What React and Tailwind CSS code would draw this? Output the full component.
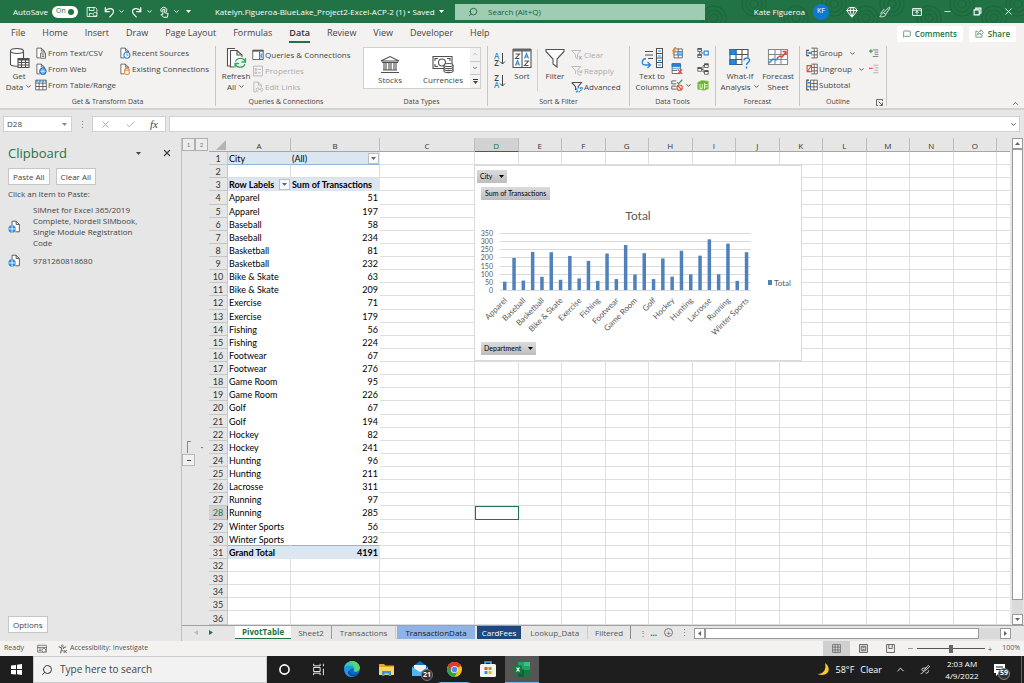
import { ChevronDown, ChevronUp, Circle, Gem, Minus, Search, X, Check, MessageSquare } from 'lucide-react'
import clsx from 'clsx'

const MENU = ['File', 'Home', 'Insert', 'Draw', 'Page Layout', 'Formulas', 'Data', 'Review', 'View', 'Developer', 'Help']

const SALES = [
  ['Apparel', 51],
  ['Apparel', 197],
  ['Baseball', 58],
  ['Baseball', 234],
  ['Basketball', 81],
  ['Basketball', 232],
  ['Bike & Skate', 63],
  ['Bike & Skate', 209],
  ['Exercise', 71],
  ['Exercise', 179],
  ['Fishing', 56],
  ['Fishing', 224],
  ['Footwear', 67],
  ['Footwear', 276],
  ['Game Room', 95],
  ['Game Room', 226],
  ['Golf', 67],
  ['Golf', 194],
  ['Hockey', 82],
  ['Hockey', 241],
  ['Hunting', 96],
  ['Hunting', 211],
  ['Lacrosse', 311],
  ['Running', 97],
  ['Running', 285],
  ['Winter Sports', 56],
  ['Winter Sports', 232],
]

const COLUMNS = ['A', 'B', 'C', 'D', 'E', 'F', 'G', 'H', 'I', 'J', 'K', 'L', 'M', 'N', 'O']
const ROWS = Array.from({ length: 36 }, (_, i) => i + 1)

/* ---------- icons ---------- */

function Icon({ size = 12, box = 16, className, children }) {
  return (
    <svg
      width={size}
      height={size}
      viewBox={`0 0 ${box} ${box}`}
      fill="none"
      stroke="#505050"
      strokeWidth="1.1"
      className={clsx('shrink-0', className)}
      aria-hidden="true"
    >
      {children}
    </svg>
  )
}

function Chevron() {
  return <ChevronDown size={7} strokeWidth={3} className="shrink-0" aria-hidden="true" />
}

function Caret({ className }) {
  return (
    <svg width="5" height="3" viewBox="0 0 5 3" className={clsx('shrink-0', className)} aria-hidden="true">
      <path d="M0 0h5L2.500 3z" fill="currentColor" />
    </svg>
  )
}

function Dots() {
  return (
    <>
      <i className="size-px bg-[#888]" />
      <i className="size-px bg-[#888]" />
      <i className="size-px bg-[#888]" />
    </>
  )
}

const page = <path d="M6.500 14.500h-4v-13h6l4 4v2M8.500 1.500v4h4" fill="#fff" />

const icons = {
  textCsv: (
    <Icon>
      {page}
      <path d="M7.500 8h6.500v7H7.500zM9 10.500h3.500M9 12.500h3.500" fill="#fff" />
    </Icon>
  ),
  web: (
    <Icon>
      {page}
      <circle cx="10.500" cy="11" r="4.500" fill="#2b88d8" stroke="#1a6fb8" />
      <path d="M6.500 11h8M10.500 7v8M8.500 8.500c1 1.500 1 3.500 0 5M12.500 8.500c-1 1.500-1 3.500 0 5" stroke="#fff" strokeWidth=".8" />
    </Icon>
  ),
  table: (
    <Icon>
      <path d="M1 1.500h14v13H1z" fill="#fff" />
      <path d="M1 2.500h14" stroke="#2b88d8" strokeWidth="2" strokeDasharray="3 1" />
      <path d="M1 5.500h14M1 10h14M5.500 4v10.500M10.500 4v10.500" />
    </Icon>
  ),
  recent: (
    <Icon>
      {page}
      <circle cx="10.500" cy="11" r="4" fill="#fff" stroke="#2b88d8" strokeWidth="1.500" />
      <path d="M10.500 8.500V11h2" stroke="#2b88d8" />
    </Icon>
  ),
  existing: (
    <Icon>
      {page}
      <path d="M7.500 8.500v5.500c0 1.500 6 1.500 6 0V8.500" fill="#fff" stroke="#e08a3c" strokeWidth="1.500" />
      <ellipse cx="10.500" cy="8.500" rx="3" ry="1.200" fill="#fff" stroke="#e08a3c" strokeWidth="1.500" />
    </Icon>
  ),
  queries: (
    <Icon>
      <path d="M1 1.500h14v12.500H1z" fill="#fff" />
      <path d="M1 2.500h14" strokeWidth="2" />
      <path d="M10 4v10" />
      <path d="M11 5h3.500v8H11z" fill="#9cc8ee" stroke="none" />
      <path d="M13.500 6.500 12 9l1.500 2.500" stroke="#2b88d8" />
    </Icon>
  ),
  properties: (
    <Icon>
      <path d="M2 1.500h12v13H2z" stroke="#b0b0b0" />
      <path d="M4 5h2v2H4zM4 9.500h2v2H4zM8 6h4M8 10.500h4" stroke="#b0b0b0" />
    </Icon>
  ),
  editLinks: (
    <Icon>
      <path d="M6 14.500H2.500v-13h6l4 4V8M8.500 1.500v4h4" stroke="#b0b0b0" />
      <path d="M9.500 9.500 7 9.500c-2 0-2 4 0 4h1.500M10.500 9.500H13c2 0 2 4 0 4h-1.500M8.500 11.500h3.500" stroke="#b0b0b0" />
    </Icon>
  ),
  clear: (
    <Icon>
      <path d="M1 2h12L8.500 7.500V13L6 11V7.500z" stroke="#b0b0b0" />
      <path d="m10.500 9.500 4 4.500M14.500 9.500l-4 4.500" stroke="#b0b0b0" strokeWidth="1.500" />
    </Icon>
  ),
  reapply: (
    <Icon>
      <path d="M1 2h12L8.500 7.500V9M6 12V7.500L1 2" stroke="#b0b0b0" />
      <path d="M14.500 9.500c-1-2-5-2-5.500 1s3.500 4 5 2M14.500 7v3h-3" stroke="#b0b0b0" />
    </Icon>
  ),
  advanced: (
    <Icon>
      <path d="M1 2h13L9 8M6 12V7.500L1 2" strokeWidth="1.500" />
      <circle cx="10.500" cy="11.500" r="2.800" stroke="#2b88d8" strokeWidth="2" strokeDasharray="1.600 1" />
      <path d="M13 9h2v2M6.500 14.500h2" stroke="#2b88d8" strokeWidth="1.500" />
    </Icon>
  ),
  flashFill: (
    <Icon>
      <path d="M4 2.500h11v12H4zM4 6.500h11M4 10.500h11M9.500 2.500v12" fill="#fff" />
      <path d="M9.500 6.500H15v4H9.500z" fill="#9cc8ee" stroke="#2b88d8" />
      <path d="M5 0 1 6h2L1.500 10 7 4.500H4.500L7 0z" fill="#e8862c" stroke="none" />
    </Icon>
  ),
  removeDup: (
    <Icon>
      <path d="M1.500 1h11v13h-11zM1.500 10h7" fill="#fff" />
      <path d="M1.500 1h11v3.500h-11z" fill="#2b88d8" stroke="#1a6fb8" />
      <path d="M1.500 7h11" stroke="#2b88d8" />
      <path d="m9 8.500 6 6M15 8.500l-6 6" stroke="#e0473e" strokeWidth="1.500" />
    </Icon>
  ),
  validate: (
    <Icon>
      <path d="M1 2.500h6M1 2.500v4h6M1 9.500h6M1 9.500v4h6" />
      <path d="m8 4 2 2.500L15 1" stroke="#2f9e4f" strokeWidth="1.500" />
      <circle cx="11.500" cy="11.500" r="3.500" fill="#fff" stroke="#e0473e" strokeWidth="1.500" />
      <path d="m9 9 5 5" stroke="#e0473e" strokeWidth="1.500" />
    </Icon>
  ),
  consolidate: (
    <Icon>
      <path d="M1 2h5v4H1zM1 10h5v4H1z" fill="#fff" />
      <path d="M1 2.500h5M1 10.500h5" strokeWidth="2" />
      <path d="M5 8h4M3.500 6v4" stroke="#2b88d8" strokeWidth="1.500" />
      <path d="M9.500 5.500H15v5H9.500z" fill="#fff" stroke="#2b88d8" strokeWidth="1.500" />
    </Icon>
  ),
  relationships: (
    <Icon>
      <path d="M1 6h5v5H1zM10 1h5v5h-5zM10 10h5v5h-5z" fill="#fff" />
      <path d="M1 7h5M10 2h5M10 11h5" strokeWidth="2" />
      <path d="M6 8.500h2v-5h2M8 8.500V12h2" />
    </Icon>
  ),
  dataModel: (
    <Icon>
      <path d="M1 4.500 6 2l9 1v10l-5 2-9-1.500z" fill="#6bb52e" stroke="#8fce55" />
      <path d="M4 6.500v6h3v-6M10 5.500v8M10 7.500h4M10 10.500h4" stroke="#fff" />
    </Icon>
  ),
  group: (
    <Icon>
      <path d="M7 1.500h8v13H7M7 6h8M7 10.500h8M11 1.500v13" fill="#fff" />
      <path d="M4 4.500H1v7h3" strokeWidth="1.500" />
      <path d="M3 8h5" stroke="#2b88d8" strokeWidth="2.500" />
    </Icon>
  ),
  ungroup: (
    <Icon>
      <path d="M7 1.500h8v13H7M7 6h8M7 10.500h8M11 1.500v13" fill="#fff" />
      <path d="M1.500 3.500h6v8h-6z" fill="#fff" stroke="#e0473e" strokeWidth="1.500" />
      <path d="m2 11 5-7" stroke="#e0473e" strokeWidth="1.500" />
    </Icon>
  ),
  subtotal: (
    <Icon>
      <path d="M6 1.500h9v13H6zM6 6h9M6 10.500h9M10.500 1.500v13" fill="#fff" />
      <path d="M4 1.500H1v13h3" strokeWidth="1.500" />
      <path d="M2 5h4M2 10h4" stroke="#2b88d8" strokeWidth="2" />
    </Icon>
  ),
}

const bigIcons = {
  getData: (
    <Icon size={22} box={22}>
      <path d="M2.500 4v13c0 3 13 3 13 0V4" fill="#fff" />
      <ellipse cx="9" cy="4" rx="6.500" ry="2.500" fill="#fff" />
      <path d="M10 11.500h11v9H10z" fill="#fff" />
      <path d="M10 12.500h11" strokeWidth="2" />
      <path d="M10 15.500h11M10 18h11M13.500 12v8.500M17.500 12v8.500" />
    </Icon>
  ),
  refresh: (
    <Icon size={22} box={22}>
      <path d="M5 19H2.500V1.500H10" fill="#fff" />
      <path d="M9 20H5.500V3.500H12L17 8v2" fill="#fff" />
      <path d="M12 3.500V8h4" />
      <path d="M20 14.500c-1-4-8-4.500-9.500 0M10.500 17c1 4 8 4.500 9.500 0M20.500 11v4h-4M10 20.500v-4h4" stroke="#37a660" strokeWidth="1.300" />
    </Icon>
  ),
  stocks: (
    <Icon size={20} box={20}>
      <path d="M1 7 10 2.500 19 7zM2 8.500h16M3 16h14M1 18.500h18M4 8.500V16M6 8.500V16M9 8.500V16M11 8.500V16M14 8.500V16M16 8.500V16" fill="#fff" />
    </Icon>
  ),
  currencies: (
    <Icon size={22} box={22}>
      <path d="M1 4.500h19v12H1z" fill="#fff" />
      <path d="M3 9V6.500h3M18 9V6.500h-3M3 12v2.500h3" />
      <circle cx="10" cy="10.500" r="3.500" />
      <path d="M12 13v6.500c1 1.500 8 1.500 9 0V13" fill="#fff" />
      <ellipse cx="16.500" cy="13" rx="4.500" ry="1.500" fill="#fff" />
      <path d="M12 15.500c1 1.500 8 1.500 9 0M12 17.500c1 1.500 8 1.500 9 0" />
    </Icon>
  ),
  sort: (
    <Icon size={20} box={20}>
      <path d="M1 1.500h18v18H1zM10 2v17" fill="#fff" />
      <path d="M1 2h18" strokeWidth="3" stroke="#666" />
      <path d="M3.500 6h4l-4 4.500h4M12.500 13h4l-4 4.500h4" />
      <path d="m3.500 17.500 2-5 2 5M4 16h3M12.500 10.500l2-5 2 5M13 9h3" stroke="#2b88d8" />
    </Icon>
  ),
  filter: (
    <Icon size={20} box={20}>
      <path d="M1 1.500h18v2L12 11v8l-4-3v-5L1 3.500z" fill="#fff" />
    </Icon>
  ),
  textToColumns: (
    <Icon size={22} box={22}>
      <path d="M4 4.500h8M4 8h8M7 11.500h5" />
      <path d="M15.500 1.500h6v19h-6zM15.500 6.500h6M15.500 11h6M15.500 15.500h6" fill="#fff" />
      <path d="M17 4h3M17 9h3M17 13.500h3M17 18h3" stroke="#2b88d8" />
      <path d="M5 11.500c-5 1-5 6.500 0 6.500h4M6.500 15l3 3-3 3" stroke="#2b88d8" strokeWidth="1.300" />
    </Icon>
  ),
  whatIf: (
    <Icon size={22} box={22}>
      <path d="M1 2.500h18v15H1zM1 7.500h18M1 12.500h18M7 2.500v15M13 2.500v15" fill="#fff" />
      <path d="M1 2.500h6v5H1zM1 12.500h6v5H1z" fill="#2b88d8" stroke="#1a6fb8" />
      <path d="M13.500 10.500H22V22h-8.500z" fill="#f3f2f1" stroke="none" />
      <path d="M15 13.500c0-3.500 6-3 5.500 0-.3 2-3 2.500-3 4.500M17.500 19.500v2" stroke="#2b88d8" strokeWidth="1.500" />
    </Icon>
  ),
  forecast: (
    <Icon size={22} box={22}>
      <path d="M1.500 2.500h19v15h-19zM1.500 7.500h19M1.500 12.500h19M8 2.500v15M14 2.500v15" fill="#fff" stroke="#888" />
      <path d="m2 16 4-4 3 1 2-2" stroke="#2b88d8" strokeWidth="1.500" />
      <path d="m10 11 3-2 2 1 4-5M15.500 4.500H19V8" stroke="#e0473e" strokeWidth="1.500" />
    </Icon>
  ),
}

/* ---------- title bar ---------- */

function TitleBar() {
  return (
    <header className="relative flex h-[23px] shrink-0 items-center overflow-hidden bg-[#217346] text-[8px] text-white">
      <svg className="absolute right-0 top-0" width="380" height="23" fill="none" stroke="#1d693d" strokeWidth="1.500" aria-hidden="true">
        {[70, 110, 152, 190, 222, 248, 285, 318, 350, 374].map((x, i) => (
          <g key={x}>
            <circle cx={x} cy={i % 2 ? 4 : 18} r="4" />
            <circle cx={x} cy={i % 2 ? 4 : 18} r="8" />
            <circle cx={x} cy={i % 2 ? 4 : 18} r="12" />
          </g>
        ))}
      </svg>
      <div className="flex w-[455px] shrink-0 items-center pl-[13px]">
        <label className="flex items-center gap-1">
          AutoSave
          <input type="checkbox" defaultChecked className="peer sr-only" />
          <span className="flex h-3 w-[26px] items-center justify-between rounded-full bg-white px-1 text-[7px] text-[#217346]">
            On
            <i className="size-[6px] rounded-full bg-[#217346]" />
          </span>
        </label>
        <div className="flex w-[137px] shrink-0 items-center justify-between pl-2 pr-6">
          <button aria-label="Save">
            <Icon size={12}>
              <path d="M1.500 2h11l2 2v10h-13zM4.500 2v4h6V2M4.500 14v-4h4M14.500 10c-1-2-5-2-5 1s4 3 5 1" stroke="#fff" />
            </Icon>
          </button>
          <button aria-label="Undo" className="flex items-center gap-[3px]">
            <Icon size={12}>
              <path d="M3 1.500v6h6M3 7c3-5 11-4.500 11 .5 0 3-3 5-5.500 7.500" stroke="#fff" strokeWidth="1.500" />
            </Icon>
            <Chevron />
          </button>
          <button aria-label="Redo" className="flex items-center gap-[3px]">
            <Icon size={12}>
              <path d="M13 1.500v6H7M13 7C10 2 2 2.500 2 7.500 2 10.500 5 12.500 7.500 15" stroke="#fff" strokeWidth="1.500" />
            </Icon>
            <Chevron />
          </button>
          <button aria-label="Touch mode" className="flex items-center gap-[3px]">
            <Icon size={12}>
              <path d="M4.500 8a4 4 0 1 1 6.500 0M6.500 11V4.500h2.500V9l4.500 1-1 5H7.500L4 11.500z" stroke="#fff" strokeWidth="1.300" />
            </Icon>
            <Chevron />
          </button>
          <Caret />
        </div>
        <div className="flex items-center gap-1 whitespace-nowrap">
          Katelyn.Figueroa-BlueLake_Project2-Excel-ACP-2 (1) • Saved
          <Caret />
        </div>
      </div>
      <div className="z-10 flex h-4 w-[250px] shrink items-center bg-[#9fcdb4] pl-[13px] text-[#17603a]">
        <Search size={10} className="-scale-x-100" aria-hidden="true" />
        <input
          type="search"
          aria-label="Search"
          placeholder="Search (Alt+Q)"
          className="ml-[10px] flex-1 bg-transparent outline-none placeholder:text-[#17603a]"
        />
      </div>
      <div className="z-10 flex flex-1 items-center justify-end pr-[10px]">
        <span className="mr-2 whitespace-nowrap">Kate Figueroa</span>
        <span className="mr-[17px] flex size-4 items-center justify-center rounded-full bg-[#0f78d4] text-[7px]">KF</span>
        <div className="flex w-[168px] items-center justify-between">
          <button aria-label="Premium"><Gem size={12} /></button>
          <button aria-label="Draw">
            <Icon size={12}>
              <path d="m6 9 7-7c1-1 2 0 1.500 1L9 11M6 9c-3 0-3 4-5 5 3 1 8 0 8-3zM2 10l5-6" stroke="#fff" />
            </Icon>
          </button>
          <button aria-label="Ribbon display options">
            <Icon size={10}>
              <path d="M1 2.500h14v11H1zM1 5h14M8 12V7M5.500 9 8 6.500 10.500 9" stroke="#fff" strokeWidth="1.500" />
            </Icon>
          </button>
          <button aria-label="Minimize"><Minus size={9} /></button>
          <button aria-label="Restore">
            <Icon size={9}>
              <path d="M2 5h9v9H2zM5 5V2h9v9h-3" stroke="#fff" strokeWidth="2" />
            </Icon>
          </button>
          <button aria-label="Close"><X size={11} /></button>
        </div>
      </div>
    </header>
  )
}

function MenuBar() {
  return (
    <nav className="flex h-[21px] shrink-0 items-center justify-between pl-[11px] pr-2 text-[#444]">
      <div className="flex h-full items-center gap-[17px] text-[9px]">
        {MENU.map((item) => (
          <button
            key={item}
            className={clsx(
              'mt-px h-[17px] whitespace-nowrap border-b-2',
              item === 'Data' ? 'border-[#217346] font-semibold text-[#333]' : 'border-transparent'
            )}
          >
            {item}
          </button>
        ))}
      </div>
      <div className="flex gap-[6px] text-[8px] font-semibold text-[#217346]">
        <button className="flex h-4 items-center gap-1 rounded-xs bg-white px-[6px]">
          <MessageSquare size={8} aria-hidden="true" />
          Comments
        </button>
        <button className="flex h-4 items-center gap-1 rounded-xs bg-white px-[6px]">
          <Icon size={9}>
            <path d="M6 4H1.500v10.500h11V10M10 1.500 15 6l-5 4.500V8c-3 0-4.500 1-5.500 3 0-4 2-6.500 5.500-7z" stroke="#217346" />
          </Icon>
          Share
        </button>
      </div>
    </nav>
  )
}

/* ---------- ribbon ---------- */

function Group({ label, className, last, children }) {
  return (
    <section className={clsx('flex shrink-0 flex-col pt-px', className)}>
      <div className="flex flex-1 items-start">{children}</div>
      <div className="flex h-[11px] shrink-0 items-center text-[7px]">
        <span className="flex-1 whitespace-nowrap text-center">{label}</span>
        {last && (
          <button aria-label="Outline settings" className="pr-[3px]">
            <Icon size={7}>
              <path d="M15 5V1H1v14h4M6 6l8 8M15 8v7H8" strokeWidth="2" />
            </Icon>
          </button>
        )}
      </div>
    </section>
  )
}

function BigButton({ icon, lines, arrow, className }) {
  return (
    <button className={clsx('flex flex-col items-center pt-[2px] text-[8px] leading-[11px]', className)}>
      <span className="mb-px flex h-[22px] items-center">{icon}</span>
      {lines.map((line, i) => (
        <span key={line} className="flex items-center gap-[2px] whitespace-nowrap">
          {line}
          {arrow && i === lines.length - 1 && <Chevron />}
        </span>
      ))}
    </button>
  )
}

function SmallButton({ icon, label, title, arrow, disabled }) {
  return (
    <button
      disabled={disabled}
      aria-label={title}
      className={clsx('flex h-4 items-center gap-px whitespace-nowrap text-[8px]', disabled && 'text-[#ababab]')}
    >
      {icon}
      {label}
      {arrow && <span className="ml-[5px]"><Chevron /></span>}
    </button>
  )
}

function SortArrow({ top, bottom, flip }) {
  return (
    <button aria-label={flip ? 'Sort Z to A' : 'Sort A to Z'} className="flex h-[22px] items-center text-[8px] font-semibold leading-[7px]">
      <span className="flex flex-col">
        <span className={flip ? '' : 'text-[#2b88d8]'}>{top}</span>
        <span className={flip ? 'text-[#2b88d8]' : ''}>{bottom}</span>
      </span>
      <svg width="7" height="12" fill="none" stroke="#444" aria-hidden="true">
        <path d="M3.500 0v11M1 8.500l2.500 2.500L6 8.500" />
      </svg>
    </button>
  )
}

function Divider() {
  return <div className="my-[2px] w-px shrink-0 bg-[#c8c6c4]" />
}

function Ribbon() {
  return (
    <div className="flex h-16 shrink-0 text-[#444]">
      <Group label="Get & Transform Data" className="w-[215px]">
        <BigButton icon={bigIcons.getData} lines={['Get', 'Data']} arrow className="ml-[3px] w-8" />
        <div className="flex flex-col items-start">
          <SmallButton icon={icons.textCsv} label="From Text/CSV" />
          <SmallButton icon={icons.web} label="From Web" />
          <SmallButton icon={icons.table} label="From Table/Range" />
        </div>
        <div className="ml-[3px] flex flex-col items-start">
          <SmallButton icon={icons.recent} label="Recent Sources" />
          <SmallButton icon={icons.existing} label="Existing Connections" />
        </div>
      </Group>
      <Divider />
      <Group label="Queries & Connections" className="w-[140px]">
        <BigButton icon={bigIcons.refresh} lines={['Refresh', 'All']} arrow className="ml-1 w-8" />
        <div className="flex flex-col items-start pt-[2px]">
          <SmallButton icon={icons.queries} label="Queries & Connections" />
          <SmallButton icon={icons.properties} label="Properties" disabled />
          <SmallButton icon={icons.editLinks} label="Edit Links" disabled />
        </div>
      </Group>
      <Group label="Data Types" className="w-[131px]">
        <div className="ml-[7px] mt-[2px] flex h-[42px] w-[118px] border border-[#d2d0ce] bg-white">
          <button className="flex w-[52px] flex-col items-center justify-end pb-[3px] text-[8px] leading-[11px]">
            {bigIcons.stocks}
            Stocks
          </button>
          <button className="flex flex-1 flex-col items-center justify-end pb-[3px] text-[8px] leading-[11px]">
            {bigIcons.currencies}
            Currencies
          </button>
          <div className="flex w-[10px] flex-col divide-y divide-[#c8c6c4] bg-[#f3f2f1]">
            <button aria-label="Previous types" className="flex flex-1 items-center justify-center text-[#ababab]"><ChevronUp size={6} strokeWidth={3} /></button>
            <button aria-label="Next types" className="flex flex-1 items-center justify-center"><ChevronDown size={6} strokeWidth={3} /></button>
            <button aria-label="More types" className="flex flex-1 flex-col items-center justify-center gap-px">
              <i className="h-px w-[5px] bg-[#333]" />
              <Caret />
            </button>
          </div>
        </div>
      </Group>
      <Divider />
      <Group label="Sort & Filter" className="w-[141px]">
        <div className="ml-[6px] flex w-[14px] flex-col pt-[3px]">
          <SortArrow top="A" bottom="Z" />
          <SortArrow top="Z" bottom="A" flip />
        </div>
        <BigButton icon={bigIcons.sort} lines={['Sort']} className="w-7" />
        <i className="mx-px mt-1 h-[42px] w-px bg-[#d2d0ce]" />
        <BigButton icon={bigIcons.filter} lines={['Filter']} className="w-8" />
        <div className="flex flex-col items-start pt-[2px]">
          <SmallButton icon={icons.clear} label="Clear" disabled />
          <SmallButton icon={icons.reapply} label="Reapply" disabled />
          <SmallButton icon={icons.advanced} label="Advanced" />
        </div>
      </Group>
      <Divider />
      <Group label="Data Tools" className="w-[85px]">
        <BigButton icon={bigIcons.textToColumns} lines={['Text to', 'Columns']} className="ml-1 w-9" />
        <div className="ml-px flex w-6 flex-col items-start">
          <SmallButton icon={icons.flashFill} title="Flash fill" />
          <SmallButton icon={icons.removeDup} title="Remove duplicates" />
          <button aria-label="Data validation" className="flex h-4 items-center gap-[2px]">
            {icons.validate}
            <Chevron />
          </button>
        </div>
        <div className="ml-[2px] flex flex-col items-start">
          <SmallButton icon={icons.consolidate} title="Consolidate" />
          <SmallButton icon={icons.relationships} title="Relationships" />
          <SmallButton icon={icons.dataModel} title="Manage data model" />
        </div>
      </Group>
      <Divider />
      <Group label="Forecast" className="w-[83px]">
        <BigButton icon={bigIcons.whatIf} lines={['What-If', 'Analysis']} arrow className="ml-1 w-10" />
        <BigButton icon={bigIcons.forecast} lines={['Forecast', 'Sheet']} className="w-9" />
      </Group>
      <Divider />
      <Group label="Outline" className="w-[86px]" last>
        <div className="ml-[6px] flex flex-col items-start">
          <SmallButton icon={icons.group} label="Group" arrow />
          <SmallButton icon={icons.ungroup} label="Ungroup" arrow />
          <SmallButton icon={icons.subtotal} label="Subtotal" />
        </div>
        <div className="ml-auto mr-[7px] flex flex-col">
          <button aria-label="Show detail" className="flex h-4 items-center">
            <Icon size={10}>
              <path d="M6 3h9M9 6.500h6M9 10h6M6 13.500h9" />
              <path d="M0 5h6M3 2v6" stroke="#2f9e4f" strokeWidth="1.800" />
            </Icon>
          </button>
          <button aria-label="Hide detail" className="flex h-4 items-center">
            <Icon size={10}>
              <path d="M7 2h8M9 6h6M9 10h6M7 14h8" stroke="#999" />
              <path d="M0 7h6" stroke="#e0473e" strokeWidth="1.800" />
            </Icon>
          </button>
        </div>
      </Group>
      <Divider />
      <button aria-label="Collapse ribbon" className="ml-auto self-end px-1">
        <ChevronUp size={9} />
      </button>
    </div>
  )
}

function FormulaBar() {
  return (
    <div className="flex h-[30px] shrink-0 items-center gap-[3px] border-t-2 border-[#d2d2d2] pl-[3px] pr-1 text-[#444]">
      <div className="flex h-4 w-[69px] items-center border border-[#d0d0d0] bg-white pl-[3px] pr-1">
        <input aria-label="Name box" defaultValue="D28" className="w-12 flex-1 bg-transparent text-[8px] outline-none" />
        <Caret className="text-[#888]" />
      </div>
      <span className="flex w-[14px] flex-col items-center gap-[2px]">
        <Dots />
      </span>
      <div className="flex h-4 w-[74px] items-center justify-around border border-[#d0d0d0] bg-white">
        <button aria-label="Cancel"><X size={11} className="text-[#aaa]" /></button>
        <button aria-label="Enter"><Check size={11} className="text-[#aaa]" /></button>
        <button className="font-['Liberation_Serif',serif] text-[11px] italic leading-none">fx</button>
      </div>
      <div className="flex h-4 flex-1 items-center border border-[#d0d0d0] bg-white pr-[2px]">
        <input aria-label="Formula" className="flex-1 bg-transparent text-[8px] outline-none" />
        <Chevron />
      </div>
    </div>
  )
}

/* ---------- clipboard pane ---------- */

function ClipItem({ children }) {
  return (
    <li className="flex items-center gap-3">
      <Icon size={13}>
        <path d="M5 9V1.500h5l4 4v9H9M10 1.500v4h4" fill="#fff" />
        <circle cx="5" cy="11" r="4.500" fill="#2b88d8" stroke="none" />
        <path d="M1 11h8M5 7v8" stroke="#fff" />
      </Icon>
      <span className="w-28">{children}</span>
    </li>
  )
}

function ClipboardPane() {
  const button = 'border border-[#c6c6c6] bg-[#fdfdfd] px-[4px] h-[17px] text-[8px]'
  return (
    <aside className="flex w-[181px] shrink-0 flex-col items-start px-2 pb-2 pt-[7px] text-[8px] text-[#444]">
      <div className="flex w-full items-center">
        <h2 className="flex-1 text-[13px] leading-4 text-[#217346]">Clipboard</h2>
        <button aria-label="Pane options" className="mr-5"><Caret className="w-[7px]" /></button>
        <button aria-label="Close pane" className="pr-px"><X size={10} strokeWidth={3} /></button>
      </div>
      <div className="mt-[7px] flex gap-[6px]">
        <button className={button}>Paste All</button>
        <button className={button}>Clear All</button>
      </div>
      <p className="mt-[3px] leading-[11px]">Click an Item to Paste:</p>
      <ul className="mt-[5px] flex flex-col gap-[6px] leading-[11px]">
        <ClipItem>SIMnet for Excel 365/2019 Complete, Nordell SIMbook, Single Module Registration Code</ClipItem>
        <ClipItem>9781260818680</ClipItem>
      </ul>
      <button className={clsx(button, 'mt-auto')}>Options</button>
    </aside>
  )
}

/* ---------- sheet ---------- */

function DropButton({ label }) {
  return (
    <button aria-label={label} className="flex size-[11px] shrink-0 items-center justify-center border border-[#c0c0c0] bg-[#f6f8fb] text-[#666]">
      <Caret />
    </button>
  )
}

function cellContent(col, row) {
  if (col === 'A') {
    if (row === 1) return 'City'
    if (row === 3) {
      return (
        <div className="flex items-center justify-between">
          Row Labels
          <DropButton label="Filter row labels" />
        </div>
      )
    }
    if (row === 31) return 'Grand Total'
    return SALES[row - 4]?.[0]
  }
  if (col === 'B') {
    if (row === 1) {
      return (
        <div className="flex items-center justify-between">
          (All)
          <DropButton label="Filter city" />
        </div>
      )
    }
    if (row === 3) return 'Sum of Transactions'
    if (row === 31) return '4191'
    return SALES[row - 4]?.[1]
  }
  return null
}

function cellClass(col, row) {
  const pivot = (col === 'A' || col === 'B') && row !== 2 && row < 32
  return clsx(
    'whitespace-nowrap border-b border-r p-0',
    !pivot && 'border-[#dedede]',
    pivot && row > 3 && row < 30 && 'border-white',
    pivot && row === 30 && 'border-b-[#95b3d7] border-r-white',
    pivot && row === 1 && 'border-b-[#95b3d7] border-r-[#dce6f1] bg-[#dce6f1]',
    pivot && (row === 3 || row === 31) && 'border-[#dce6f1] bg-[#dce6f1] font-bold',
    pivot && 'pl-px pt-px',
    pivot && col === 'B' && row > 3 && 'pr-px text-right',
    col === 'D' && row === 28 && 'outline outline-1 -outline-offset-1 outline-[#217346]'
  )
}

function OutlineCell({ row }) {
  if (row === 23) return <span className="ml-[5px] block h-3 w-1 border-l border-t border-[#888]" />
  if (row === 24) {
    return (
      <button aria-label="Collapse group" className="flex h-3 w-[13px] items-center justify-center border border-[#b8b8b8] bg-[#f0f0f0]">
        <i className="h-px w-1 bg-[#444]" />
      </button>
    )
  }
  return null
}

function Grid() {
  const level = 'flex h-[13px] w-[13px] items-center justify-center border border-[#b0b0b0] bg-[#ececec] text-[6px] leading-[8px] text-[#777]'
  return (
    <table className="h-full w-full table-fixed border-separate border-spacing-0 font-['Lato',sans-serif] text-[9px] leading-[11px] text-black">
      <colgroup>
        <col className="w-[13px]" />
        <col className="w-[14px]" />
        <col className="w-[19px]" />
        <col className="w-[63px]" />
        <col className="w-[89px]" />
        <col className="w-[95px]" />
        {COLUMNS.slice(3).map((c) => (
          <col key={c} />
        ))}
        <col className="w-[13px]" />
      </colgroup>
      <thead>
        <tr className="h-[14px] bg-[#e6e6e6] text-[#333]">
          <td className="p-0 align-top"><button className={level}>1</button></td>
          <td className="p-0 align-top"><button className={level}>2</button></td>
          <td className="border-b border-[#a6a6a6] p-0">
            <svg width="10" height="10" className="ml-auto mr-[2px]" aria-hidden="true">
              <path d="M10 0v10H0z" fill="#b4b4b4" />
            </svg>
          </td>
          {COLUMNS.map((c) => (
            <th
              key={c}
              scope="col"
              className={clsx(
                "border-b border-r p-0 pt-[2px] font-['Open_Sans',sans-serif] text-[8px] font-normal",
                c === 'D' ? 'border-r-[#bdbdbd] border-b-[#217346] bg-[#d2d2d2] text-[#217346]' : 'border-r-[#bdbdbd] border-b-[#a6a6a6]'
              )}
            >
              {c}
            </th>
          ))}
          <td className="border-b border-[#a6a6a6] p-0" />
        </tr>
      </thead>
      <tbody>
        {ROWS.map((row) => (
          <tr key={row} className="bg-white">
            <td className="bg-[#e6e6e6] p-0"><OutlineCell row={row} /></td>
            <td className="bg-[#e6e6e6] p-0 text-center text-[7px]">{row === 23 ? '·' : ''}</td>
            <th
              scope="row"
              className={clsx(
                'border-b border-r p-0 pt-px font-normal',
                row === 28
                  ? 'border-r-[#217346] border-b-[#bdbdbd] bg-[#d2d2d2] text-[#217346]'
                  : 'border-r-[#c6c6c6] border-b-[#c6c6c6] bg-[#e6e6e6] text-[#333]'
              )}
            >
              {row}
            </th>
            {COLUMNS.map((c) => (
              <td key={c} className={cellClass(c, row)}>
                {cellContent(c, row)}
              </td>
            ))}
            <td className="border-b border-[#dedede] p-0" />
          </tr>
        ))}
      </tbody>
    </table>
  )
}

function PivotChart() {
  const field = 'flex h-[13px] items-center bg-linear-to-b from-[#dcdcdc] to-[#bdbdbd] text-[7px] text-black'
  const y = (v) => 90 - (v * 57) / 350
  return (
    <div className="absolute left-[292px] top-[27px] flex h-[196px] w-[328px] flex-col items-start border border-[#d9d9d9] bg-white pb-1 pl-[2px] pt-1 font-['Lato',sans-serif]">
      <button className={clsx(field, 'gap-[7px] px-[3px]')}>
        City <Caret />
      </button>
      <button className={clsx(field, 'ml-1 mt-1 px-1')}>Sum of Transactions</button>
      <svg width="324" height="142" className="shrink-0 text-[8px]" fill="#595959" role="img" aria-label="Total transactions by department">
        <text x="161" y="20" textAnchor="middle" fontSize="12">Total</text>
        {[0, 50, 100, 150, 200, 250, 300, 350].map((v) => (
          <g key={v}>
            <path d={`M23 ${Math.round(y(v)) + 0.5}h251`} stroke="#d9d9d9" />
            <text x="16" y={y(v) + 3} textAnchor="end" fontSize="7">{v}</text>
          </g>
        ))}
        {SALES.map(([name, v], i) => {
          const x = 27.5 + i * 9.3
          return (
            <g key={i}>
              <rect x={x - 1.5} y={y(v)} width="3.500" height={90 - y(v)} fill="#4f81bd" />
              {i % 2 === 0 && (
                <text x={x + 3} y="101" textAnchor="end" transform={`rotate(-45 ${x + 3} 101)`}>
                  {name}
                </text>
              )}
            </g>
          )
        })}
        <rect x="291" y="80" width="4" height="5" fill="#4f81bd" />
        <text x="297" y="86">Total</text>
      </svg>
      <button className={clsx(field, 'ml-1 gap-[7px] px-[3px]')}>
        Department <Caret />
      </button>
    </div>
  )
}

function ScrollArrow({ d, label }) {
  return (
    <button aria-label={label} className="flex size-[11px] shrink-0 items-center justify-center border border-[#999] bg-white">
      <svg width="5" height="5" aria-hidden="true">
        <path d={d} fill="#666" />
      </svg>
    </button>
  )
}

function SheetTabs() {
  const tab = 'flex h-[13px] items-center whitespace-nowrap'
  return (
    <div className="flex h-4 shrink-0 items-start border-t border-[#a0a0a0] text-[8px] text-[#555]">
      <div className="flex h-[13px] w-[53px] items-center gap-[11px] pl-3">
        <button aria-label="Previous sheets" className="text-[#bbb]">
          <svg width="4" height="5"><path d="M4 0v5L0 2.500z" fill="currentColor" /></svg>
        </button>
        <button aria-label="Next sheets" className="text-[#217346]">
          <svg width="4" height="5"><path d="M0 0v5l4-2.500z" fill="currentColor" /></svg>
        </button>
      </div>
      <button className={clsx(tab, 'border-b border-[#217346] bg-white px-[7px] font-bold text-[#217346]')}>PivotTable</button>
      <button className={clsx(tab, 'border-r border-[#999] px-[7px]')}>Sheet2</button>
      <button className={clsx(tab, 'border-r border-[#ccc] px-2')}>Transactions</button>
      <button className={clsx(tab, 'mx-px bg-[#8db4e3] px-2 text-[#222]')}>TransactionData</button>
      <button className={clsx(tab, 'mx-px bg-[#1f497d] px-[5px] text-white')}>CardFees</button>
      <button className={clsx(tab, 'border-r border-[#ccc] px-2')}>Lookup_Data</button>
      <button className={clsx(tab, 'border-r border-[#888] px-[7px]')}>Filtered</button>
      <button className="flex h-[13px] items-center pl-2">
        ⋮<b className="ml-[3px] text-[#217346]">...</b>
      </button>
      <button aria-label="New sheet" className="mx-[7px] mt-[2px] flex size-[9px] items-center justify-center rounded-full border border-[#777] leading-none">
        +
      </button>
      <span className="mt-[3px] flex w-2 flex-col items-center gap-[2px]">
        <Dots />
      </span>
      <div className="ml-auto mr-[13px] mt-[2px] flex w-[317px] bg-[#dadada]">
        <ScrollArrow d="M4 0v5L1 2.500z" label="Scroll left" />
        <i className="w-[274px] border border-[#999] bg-white" />
        <i className="flex-1" />
        <ScrollArrow d="M1 0v5l3-2.500z" label="Scroll right" />
      </div>
    </div>
  )
}

function Sheet() {
  return (
    <main className="flex min-w-0 flex-1 flex-col border-l border-[#c0c0c0]">
      <div className="flex min-h-0 flex-1">
        <div className="relative min-w-0 flex-1">
          <Grid />
          <PivotChart />
        </div>
        <div className="ml-[2px] mr-px flex w-[11px] flex-col bg-[#dadada]">
          <ScrollArrow d="M0 4h5L2.500 1z" label="Scroll up" />
          <i className="flex-1 border border-[#999] bg-white" />
          <i className="h-[14px]" />
          <ScrollArrow d="M0 1h5L2.500 4z" label="Scroll down" />
        </div>
      </div>
      <SheetTabs />
    </main>
  )
}

/* ---------- status bar and taskbar ---------- */

function StatusBar() {
  return (
    <footer className="flex h-[15px] shrink-0 items-center bg-[#f3f2f1] px-1 text-[7px] text-[#555]">
      <span className="w-[33px]">Ready</span>
      <Icon size={10}>
        <path d="M1 2h14v11H1zM1 5.500h14M3 8h4M3 10.500h4" />
        <circle cx="11" cy="10" r="3" fill="#fff" />
      </Icon>
      <button className="ml-[11px] flex items-center gap-[2px]">
        <Icon size={10}>
          <circle cx="7" cy="3" r="1.500" />
          <path d="M1 4.500 5.500 6v3L4 15M13 4.500 8.500 6v2M7 10l1 2M9 9.500l5 5M14 9.500l-5 5" strokeWidth="1.500" />
        </Icon>
        Accessibility: Investigate
      </button>
      <div className="ml-auto flex h-full items-center">
        <button aria-label="Normal view" className="flex h-full w-[27px] items-center justify-center bg-[#d0d0d0]">
          <Icon size={9}><path d="M1 1h14v14H1zM1 5.500h14M1 10.500h14M5.500 1v14M10.500 1v14" /></Icon>
        </button>
        <button aria-label="Page layout view" className="flex w-[27px] justify-center">
          <Icon size={9}><path d="M1 1h14v14H1zM4 4h8v8H4zM6 6.500h4M6 9.500h4" strokeWidth="1.500" /></Icon>
        </button>
        <button aria-label="Page break view" className="flex w-[27px] justify-center">
          <Icon size={9}><path d="M1 1h14v14H1zM5 1v7h6V1" strokeWidth="1.500" /></Icon>
        </button>
        <button aria-label="Zoom out" className="ml-[3px]"><Minus size={7} /></button>
        <input
          type="range"
          aria-label="Zoom"
          defaultValue="50"
          className="mx-[3px] h-px w-[68px] appearance-none bg-[#555] [&::-webkit-slider-thumb]:h-2 [&::-webkit-slider-thumb]:w-1 [&::-webkit-slider-thumb]:appearance-none [&::-webkit-slider-thumb]:bg-[#666]"
        />
        <button aria-label="Zoom in" className="text-[8px] leading-none">+</button>
        <span className="ml-[10px]">100%</span>
      </div>
    </footer>
  )
}

function Task({ label, active, children }) {
  return (
    <button
      aria-label={label}
      className={clsx('flex w-[34px] items-center justify-center border-b', active ? 'border-[#76b9ed] bg-[#555]' : 'border-transparent')}
    >
      {children}
    </button>
  )
}

function Taskbar() {
  return (
    <div className="flex h-[27px] shrink-0 bg-[#1e1e1e] text-[8px] text-white">
      <button aria-label="Start" className="flex w-[33px] items-center justify-center">
        <svg width="11" height="11" fill="#fff"><path d="M0 1.500 5 1v4H0zM6 .8 11 0v5H6zM0 6h5v4.500L0 10zM6 6h5v5l-5-.8z" /></svg>
      </button>
      <div className="flex w-[234px] items-center gap-[7px] border border-[#ccc] bg-[#f2f2f2] pl-[7px] text-[#333]">
        <Search size={12} className="-scale-x-100" aria-hidden="true" />
        <input
          aria-label="Search Windows"
          placeholder="Type here to search"
          className="flex-1 bg-transparent text-[10px] outline-none placeholder:text-[#444]"
        />
      </div>
      <Task label="Cortana"><Circle size={11} strokeWidth={3.500} /></Task>
      <Task label="Task view">
        <Icon size={13}>
          <path d="M2 1v2.500h8V1M2 15v-2.500h8V15M2 5.500h8v5H2zM14 1v3M14 7v8" stroke="#fff" />
        </Icon>
      </Task>
      <Task label="Edge">
        <svg width="16" height="16" viewBox="0 0 16 16">
          <circle cx="8" cy="8" r="8" fill="#0c68c0" />
          <path d="M.2 7C1-1.500 14-2.500 15.800 6.500c.5 4-5 5-6.300 3.500C11 8 9 5 6 5 3.500 5 1 6 .2 7z" fill="#3fc6b0" />
          <path d="M8 0c4 0 7 2.500 7.800 6.500.4 3-3 4.500-5.300 4C12 6 9 2 5 1c1-.6 2-1 3-1z" fill="#5bd66c" />
          <path d="M.2 7C2 3.500 9 3.500 9.800 8c-3-1.500-5 1-4 4 .6 2 2.500 3.500 4.200 3.700C4 17 0 13 .2 7z" fill="#1a9be6" />
          <path d="M5.800 9.500c-.5 4 4 5.500 8 3-3 4.500-9 3.500-10-1 0-1.500 1-2 2-2z" fill="#0b4f9c" />
        </svg>
      </Task>
      <Task label="File Explorer">
        <svg width="15" height="13" viewBox="0 0 15 13">
          <path d="M0 1h5l1.500 1.500H15V12H0z" fill="#e8a723" />
          <path d="M0 4h15v8H0z" fill="#fcd462" />
          <path d="M3 13V8h9v5H9.500v-2.500h-4V13z" fill="#3d94dc" />
        </svg>
      </Task>
      <Task label="Mail">
        <span className="relative block">
          <svg width="18" height="16" viewBox="0 0 18 16">
            <path d="M1 6 9 0l8 6v9H1z" fill="#1272c4" />
            <path d="M3 4h12v8H3z" fill="#f2f2f2" />
            <path d="M1 6l8 5 8-5v9H1z" fill="#4fb4f0" />
          </svg>
          <span className="absolute -bottom-1 -right-1 flex size-3 items-center justify-center rounded-full border border-[#777] bg-[#333] text-[7px] font-bold">21</span>
        </span>
      </Task>
      <button aria-label="Chrome" className="flex w-[34px] items-center justify-center border-b border-x-4 border-x-transparent border-b-[#76b9ed]">
        <svg width="15" height="15" viewBox="0 0 16 16">
          <circle cx="8" cy="8" r="8" fill="#fbc116" />
          <path d="M8 8 1.100 4A8 8 0 0 1 14.900 4z" fill="#e33b2e" />
          <path d="M8 8 1.100 4A8 8 0 0 0 8 16l3.500-6z" fill="#2ba24c" />
          <path d="M8 4.200h7a8 8 0 0 0-14-.2l3.500 6z" fill="#e33b2e" />
          <circle cx="8" cy="8" r="3.800" fill="#fff" />
          <circle cx="8" cy="8" r="3" fill="#4a8af4" />
        </svg>
      </button>
      <Task label="Microsoft Store">
        <svg width="16" height="16" viewBox="0 0 16 16">
          <path d="M5 3V1h6v2" fill="none" stroke="#49b8ee" strokeWidth="1.500" />
          <rect y="3" width="16" height="13" rx="1.500" fill="#f4f4f4" />
          <path d="M4.500 6h3v3h-3z" fill="#f0502a" />
          <path d="M8.500 6h3v3h-3z" fill="#7eb900" />
          <path d="M4.500 10h3v3h-3z" fill="#1ba0e2" />
          <path d="M8.500 10h3v3h-3z" fill="#fbb900" />
        </svg>
      </Task>
      <Task label="Excel" active>
        <svg width="16" height="15" viewBox="0 0 16 15">
          <path d="M4 0h6v7.500H4z" fill="#21a366" />
          <path d="M10 0h6v4h-6z" fill="#33c481" />
          <path d="M10 4h6v4h-6z" fill="#21a366" />
          <path d="M4 7.500h6V15H4z" fill="#185c37" />
          <path d="M10 8h6v7h-6z" fill="#107c41" />
          <path d="M0 3.500h8v8H0z" fill="#107c41" />
          <path d="m2.500 5.500 3 4M5.500 5.500l-3 4" stroke="#fff" strokeWidth="1.200" />
        </svg>
      </Task>
      <div className="ml-auto flex items-center">
        <button className="flex items-center gap-[6px] whitespace-nowrap text-[9px]">
          <svg width="13" height="13" viewBox="0 0 13 13"><path d="M8 0c8 6 2 15-7.500 11C7 11 9.500 6 8 0z" fill="#fbc926" /></svg>
          <span>58°F</span>
          <span>Clear</span>
        </button>
        <button aria-label="Hidden icons" className="ml-[13px]"><ChevronUp size={11} /></button>
        <button aria-label="Pen" className="ml-[14px]">
          <Icon size={11}>
            <path d="m6 9 6-7 2 2-7 6-2 .5zM9 6C3 5 1 8 4 10s-2 4-3 4M8 13c3 1 5-1 4-4" stroke="#fff" />
          </Icon>
        </button>
        <div className="ml-3 flex w-[38px] flex-col items-center leading-3">
          <span className="whitespace-nowrap">2:03 AM</span>
          <span>4/9/2022</span>
        </div>
        <button aria-label="Notifications" className="relative ml-[13px] mr-[15px]">
          <svg width="12" height="12" fill="#fff"><path d="M0 0h11v9H5l-3 3V9H0z" /><path d="M2 3h7M2 5.500h7" stroke="#1e1e1e" /></svg>
          <span className="absolute -bottom-1 -right-1 flex size-3 items-center justify-center rounded-full border border-[#888] bg-[#333] text-[7px] font-bold">59</span>
        </button>
        <i className="mr-[2px] h-full w-px bg-[#666]" />
      </div>
    </div>
  )
}

export default function App() {
  return (
    <div className="flex h-screen flex-col overflow-hidden bg-[#e6e6e6] font-['Open_Sans',sans-serif]">
      <TitleBar />
      <div className="shrink-0 bg-[#f3f2f1]">
        <MenuBar />
        <Ribbon />
      </div>
      <FormulaBar />
      <div className="flex min-h-0 flex-1">
        <ClipboardPane />
        <Sheet />
      </div>
      <StatusBar />
      <Taskbar />
    </div>
  )
}
